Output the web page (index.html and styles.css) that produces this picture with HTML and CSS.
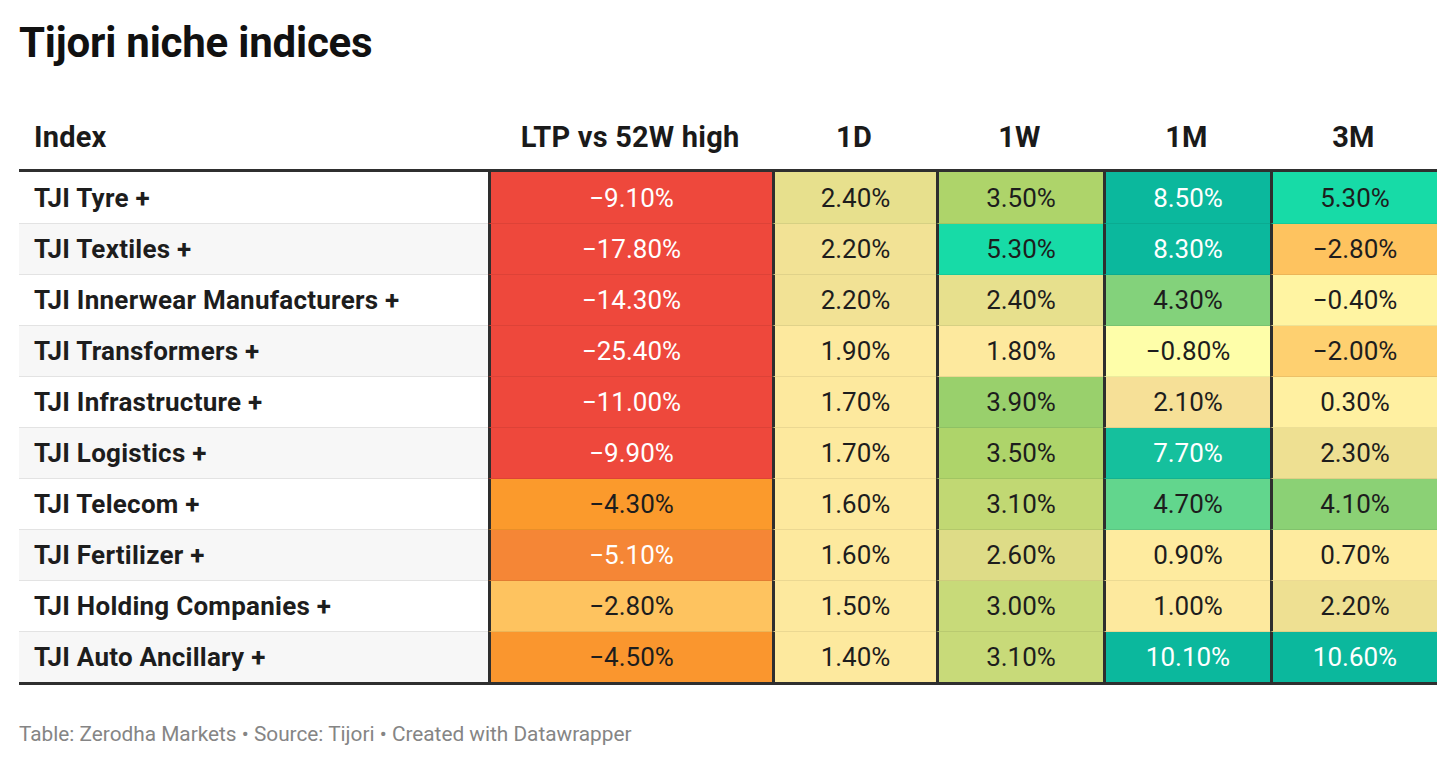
FILE: index.html
```html
<!DOCTYPE html>
<html lang="en">
<head>
<meta charset="utf-8">
<title>Tijori niche indices</title>
<link rel="stylesheet" href="styles.css">
</head>
<body>
<div class="chart">
  <h1 class="title">Tijori niche indices</h1>
  <table class="tbl">
    <colgroup>
      <col class="c-name"><col class="c-ltp"><col class="c-sm"><col class="c-md"><col class="c-md"><col class="c-md">
    </colgroup>
    <thead>
      <tr>
        <th class="h-name">Index</th>
        <th>LTP vs 52W high</th>
        <th>1D</th>
        <th>1W</th>
        <th>1M</th>
        <th>3M</th>
      </tr>
    </thead>
    <tbody>
      <tr>
        <td class="name">TJI Tyre +</td>
        <td class="red wt">−9.10%</td>
        <td class="y-24">2.40%</td>
        <td class="g-35">3.50%</td>
        <td class="teal wt">8.50%</td>
        <td class="aqua">5.30%</td>
      </tr>
      <tr>
        <td class="name">TJI Textiles +</td>
        <td class="red wt">−17.80%</td>
        <td class="y-22">2.20%</td>
        <td class="aqua">5.30%</td>
        <td class="teal wt">8.30%</td>
        <td class="o-28">−2.80%</td>
      </tr>
      <tr>
        <td class="name">TJI Innerwear Manufacturers +</td>
        <td class="red wt">−14.30%</td>
        <td class="y-22">2.20%</td>
        <td class="y-24">2.40%</td>
        <td class="g-43">4.30%</td>
        <td class="y-n04">−0.40%</td>
      </tr>
      <tr>
        <td class="name">TJI Transformers +</td>
        <td class="red wt">−25.40%</td>
        <td class="y-17">1.90%</td>
        <td class="y-17">1.80%</td>
        <td class="y-n08">−0.80%</td>
        <td class="o-20">−2.00%</td>
      </tr>
      <tr>
        <td class="name">TJI Infrastructure +</td>
        <td class="red wt">−11.00%</td>
        <td class="y-17">1.70%</td>
        <td class="g-39">3.90%</td>
        <td class="y-21">2.10%</td>
        <td class="y-03">0.30%</td>
      </tr>
      <tr>
        <td class="name">TJI Logistics +</td>
        <td class="red wt">−9.90%</td>
        <td class="y-17">1.70%</td>
        <td class="g-35">3.50%</td>
        <td class="teal2 wt">7.70%</td>
        <td class="y-23">2.30%</td>
      </tr>
      <tr>
        <td class="name">TJI Telecom +</td>
        <td class="o-43">−4.30%</td>
        <td class="y-17">1.60%</td>
        <td class="g-31">3.10%</td>
        <td class="g-47">4.70%</td>
        <td class="g-41">4.10%</td>
      </tr>
      <tr>
        <td class="name">TJI Fertilizer +</td>
        <td class="o-51 wt">−5.10%</td>
        <td class="y-17">1.60%</td>
        <td class="y-26">2.60%</td>
        <td class="y-09">0.90%</td>
        <td class="y-09">0.70%</td>
      </tr>
      <tr>
        <td class="name">TJI Holding Companies +</td>
        <td class="o-28">−2.80%</td>
        <td class="y-17">1.50%</td>
        <td class="g-30">3.00%</td>
        <td class="y-17">1.00%</td>
        <td class="y-23">2.20%</td>
      </tr>
      <tr>
        <td class="name">TJI Auto Ancillary +</td>
        <td class="o-45">−4.50%</td>
        <td class="y-17">1.40%</td>
        <td class="g-30">3.10%</td>
        <td class="teal wt">10.10%</td>
        <td class="teal wt">10.60%</td>
      </tr>
    </tbody>
  </table>
  <p class="footer">Table: Zerodha Markets • Source: Tijori • Created with Datawrapper</p>
</div>
</body>
</html>
```

FILE: styles.css
```css
html, body {
  margin: 0;
  padding: 0;
  background: #ffffff;
}

body {
  font-family: Roboto, "Liberation Sans", Arial, sans-serif;
  color: #1d1d1d;
}

.chart {
  padding: 18px 19px 0 19px;
}

.title {
  margin: 0;
  font-size: 42px;
  line-height: 50px;
  font-weight: 700;
  color: #111111;
  letter-spacing: -0.2px;
}

.tbl {
  table-layout: fixed;
  border-collapse: separate;
  border-spacing: 0;
  width: 1418px;
}

.c-name { width: 469px; }
.c-ltp { width: 284px; }
.c-sm { width: 164px; }
.c-md { width: 167px; }

.tbl th {
  height: 51px;
  padding: 35px 0 15px 0;
  font-size: 29px;
  line-height: 34px;
  font-weight: 700;
  letter-spacing: 0.2px;
  text-align: center;
  vertical-align: bottom;
  color: #1a1a1a;
  border-bottom: 3px solid #2f2f2f;
}

.tbl th.h-name {
  text-align: left;
  padding-left: 15px;
}

.tbl td {
  height: 50px;
  padding: 0;
  font-size: 26px;
  line-height: 30px;
  text-align: center;
  vertical-align: middle;
  border-bottom: 1px solid rgba(0, 0, 0, 0.07);
  border-left: 3px solid #2e2e2e;
  font-variant-numeric: tabular-nums;
  color: #1d1d1d;
}

.tbl tbody tr:first-child td {
  padding-top: 1px;
}

.tbl td.name {
  border-left: none;
  text-align: left;
  padding-left: 15px;
  font-weight: 700;
  letter-spacing: 0.25px;
  background: #ffffff;
  border-bottom-color: #e3e3e3;
}

.tbl tbody tr:nth-child(even) td.name {
  background: #f7f7f7;
}

.tbl tbody tr:last-child td,
.tbl tbody tr:last-child td.name {
  border-bottom: 3px solid #2f2f2f;
}

.tbl td.wt { color: #ffffff; }

/* colour scale */
.red   { background: #ee483c; }
.o-51  { background: #f58636; }
.o-45  { background: #fa962e; }
.o-43  { background: #fb9a2c; }
.o-28  { background: #fec35f; }
.o-20  { background: #fed070; }
.y-n08 { background: #fefea9; }
.y-n04 { background: #fff4a2; }
.y-03  { background: #fff0a1; }
.y-09  { background: #feeb9f; }
.y-17  { background: #fde99e; }
.y-21  { background: #f6e097; }
.y-22  { background: #f2e295; }
.y-23  { background: #eee092; }
.y-24  { background: #e7e08d; }
.y-26  { background: #dedc87; }
.g-30  { background: #c8da79; }
.g-31  { background: #c1d873; }
.g-35  { background: #aed46a; }
.g-39  { background: #99d06c; }
.g-41  { background: #8bd175; }
.g-43  { background: #83d27b; }
.g-47  { background: #62d68d; }
.aqua  { background: #17dba7; }
.teal2 { background: #15c09d; }
.teal  { background: #0bb89d; }

.footer {
  margin: 36px 0 0 0;
  font-size: 20.8px;
  line-height: 26px;
  color: #858585;
}
```
